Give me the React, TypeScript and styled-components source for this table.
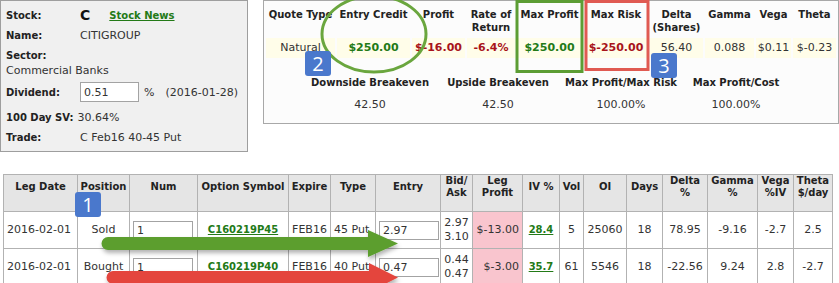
import React from "react";
import styled, { createGlobalStyle } from "styled-components";

const GlobalStyle = createGlobalStyle`
  html, body {
    margin: 0;
    padding: 0;
    background: #ffffff;
  }
  body {
    font-family: "DejaVu Sans", Verdana, sans-serif;
    font-size: 11px;
    color: #333333;
  }
`;

const Page = styled.div`
  position: relative;
  width: 839px;
  height: 283px;
  overflow: hidden;
`;

const TopRow = styled.div`
  display: flex;
  align-items: flex-start;
  gap: 15px;
`;

/* ---------- stock box ---------- */

const StockPanel = styled.div`
  box-sizing: border-box;
  width: 248px;
  height: 152px;
  padding: 4px 4px 0 5px;
  background: #f0f0f0;
  border: 1px solid #9e9e9e;
`;

const InfoRow = styled.div<{ $h: number; $top?: number }>`
  display: flex;
  align-items: center;
  height: ${(p) => p.$h}px;
  margin-top: ${(p) => p.$top ?? 0}px;
  white-space: nowrap;
`;

const Label = styled.span<{ $w?: number }>`
  flex: none;
  width: ${(p) => (p.$w ? `${p.$w}px` : "auto")};
  margin-right: ${(p) => (p.$w ? 0 : 4)}px;
  font-size: 10px;
  font-weight: bold;
  color: #222222;
`;

const Ticker = styled.span`
  font-size: 14px;
  font-weight: bold;
  color: #111111;
`;

const GreenLink = styled.a<{ $size?: number }>`
  font-size: ${(p) => p.$size ?? 10}px;
  font-weight: bold;
  color: #237a17;
  text-decoration: underline;
  cursor: pointer;
`;

const StockLink = styled(GreenLink)`
  margin-left: 19px;
`;

const SectorBlock = styled.div`
  margin-top: 3px;
  line-height: 15px;
`;

const SmallInput = styled.input<{ $w: number; $h: number }>`
  box-sizing: border-box;
  width: ${(p) => p.$w}px;
  height: ${(p) => p.$h}px;
  margin: 0;
  padding: 0 3px;
  border: 1px solid #a3a3a3;
  background: #ffffff;
  font-family: "DejaVu Sans", Verdana, sans-serif;
  font-size: 11px;
  color: #333333;
  outline: none;
`;

const Percent = styled.span`
  margin-left: 5px;
`;

const DateNote = styled.span`
  margin-left: 11px;
`;

/* ---------- quote box ---------- */

const QuotePanel = styled.div`
  box-sizing: border-box;
  width: 576px;
  height: 124px;
  padding: 0 2px;
  background: #fcfcfc;
  border: 1px solid #a8a8a8;
`;

const QuoteGrid = styled.div`
  display: grid;
  grid-template-columns: 69px 73px 53px 48px 65px 64px 53px 49px 35px 43px;
  column-gap: 2px;
`;

const QuoteHead = styled.div`
  box-sizing: border-box;
  height: 37px;
  padding-top: 7px;
  font-size: 10px;
  font-weight: bold;
  line-height: 13px;
  text-align: center;
  white-space: nowrap;
  color: #222222;
`;

type Tone = "gain" | "loss" | "plain";

const toneColor = (t?: Tone) =>
  t === "gain" ? "#237a17" : t === "loss" ? "#a8141a" : "#333333";

const QuoteCell = styled.div<{ $tone?: Tone }>`
  height: 20px;
  line-height: 20px;
  background: #fffde9;
  text-align: center;
  white-space: nowrap;
  font-weight: ${(p) => (p.$tone && p.$tone !== "plain" ? "bold" : "normal")};
  color: ${(p) => toneColor(p.$tone)};
`;

const BreakevenGrid = styled.div`
  display: grid;
  grid-template-columns: 134px 122px 124px 106px;
  row-gap: 9px;
  margin: 18px 0 0 37px;
  line-height: 13px;
  text-align: center;
  white-space: nowrap;
`;

const BreakevenHead = styled.div`
  font-size: 10px;
  font-weight: bold;
  color: #222222;
`;

/* ---------- legs table ---------- */

const LegTable = styled.table`
  margin: 22px 0 0 3px;
  border-collapse: collapse;
  table-layout: fixed;
  width: 829px;
`;

const HeadCell = styled.th`
  height: 36px;
  box-sizing: border-box;
  padding: 0 2px 12px;
  border: 1px solid #b2b2b2;
  background: #e5e5e5;
  font-size: 10px;
  font-weight: bold;
  line-height: 12px;
  text-align: center;
  vertical-align: middle;
  white-space: nowrap;
  color: #222222;
`;

const Cell = styled.td<{ $align?: "left" | "center" | "right"; $loss?: boolean }>`
  height: 37px;
  box-sizing: border-box;
  padding: 0 3px;
  border: 1px solid #b2b2b2;
  background: ${(p) => (p.$loss ? "#f9c5ce" : "#ffffff")};
  text-align: ${(p) => p.$align ?? "center"};
  vertical-align: middle;
  white-space: nowrap;
  line-height: 14px;
`;

const InputCell = styled(Cell)`
  padding: 0 2px 0 3px;
`;

/* ---------- annotations ---------- */

const Marks = styled.svg`
  position: absolute;
  left: 0;
  top: 0;
  pointer-events: none;
`;

const Badge = styled.div<{ $x: number; $y: number }>`
  position: absolute;
  left: ${(p) => p.$x}px;
  top: ${(p) => p.$y}px;
  width: 26px;
  height: 25px;
  border-radius: 3px;
  background: #4a78cc;
  color: #ffffff;
  font-family: "Open Sans", "Liberation Sans", sans-serif;
  font-size: 20px;
  line-height: 25px;
  text-align: center;
`;

const quoteHeads: React.ReactNode[] = [
  "Quote Type",
  "Entry Credit",
  "Profit",
  <>Rate of<br />Return</>,
  "Max Profit",
  "Max Risk",
  <>Delta<br />(Shares)</>,
  "Gamma",
  "Vega",
  "Theta",
];

const quoteValues: { v: string; t?: Tone }[] = [
  { v: "Natural" },
  { v: "$250.00", t: "gain" },
  { v: "$-16.00", t: "loss" },
  { v: "-6.4%", t: "loss" },
  { v: "$250.00", t: "gain" },
  { v: "$-250.00", t: "loss" },
  { v: "56.40" },
  { v: "0.088" },
  { v: "$0.11" },
  { v: "$-0.23" },
];

const breakevens = [
  ["Downside Breakeven", "42.50"],
  ["Upside Breakeven", "42.50"],
  ["Max Profit/Max Risk", "100.00%"],
  ["Max Profit/Cost", "100.00%"],
];

const colWidths = [74, 52, 68, 91, 42, 45, 65, 32, 50, 37, 24, 43, 36, 45, 50, 36, 39];

const legHeads: React.ReactNode[] = [
  "Leg Date",
  "Position",
  "Num",
  "Option Symbol",
  "Expire",
  "Type",
  "Entry",
  <>Bid/<br />Ask</>,
  <>Leg<br />Profit</>,
  "IV %",
  "Vol",
  "OI",
  "Days",
  <>Delta<br />%</>,
  <>Gamma<br />%</>,
  <>Vega<br />%IV</>,
  <>Theta<br />$/day</>,
];

const legs = [
  {
    date: "2016-02-01", pos: "Sold", num: "1", sym: "C160219P45", exp: "FEB16", type: "45 Put",
    entry: "2.97", bid: "2.97", ask: "3.10", profit: "$-13.00", iv: "28.4", vol: "5", oi: "25060",
    days: "18", delta: "78.95", gamma: "-9.16", vega: "-2.7", theta: "2.5",
  },
  {
    date: "2016-02-01", pos: "Bought", num: "1", sym: "C160219P40", exp: "FEB16", type: "40 Put",
    entry: "0.47", bid: "0.44", ask: "0.47", profit: "$-3.00", iv: "35.7", vol: "61", oi: "5546",
    days: "18", delta: "-22.56", gamma: "9.24", vega: "2.8", theta: "-2.7",
  },
];

export default function App() {
  return (
    <Page>
      <GlobalStyle />
      <TopRow>
        <StockPanel>
          <InfoRow $h={20}>
            <Label $w={74}>Stock:</Label>
            <Ticker>C</Ticker>
            <StockLink>Stock News</StockLink>
          </InfoRow>
          <InfoRow $h={20}>
            <Label $w={74}>Name:</Label>
            CITIGROUP
          </InfoRow>
          <SectorBlock>
            <Label>Sector:</Label>
            <div>Commercial Banks</div>
          </SectorBlock>
          <InfoRow $h={24} $top={2}>
            <Label $w={74}>Dividend:</Label>
            <SmallInput $w={59} $h={20} defaultValue="0.51" />
            <Percent>%</Percent>
            <DateNote>(2016-01-28)</DateNote>
          </InfoRow>
          <InfoRow $h={20} $top={3}>
            <Label>100 Day SV:</Label>
            30.64%
          </InfoRow>
          <InfoRow $h={20}>
            <Label $w={74}>Trade:</Label>
            C Feb16 40-45 Put
          </InfoRow>
        </StockPanel>

        <QuotePanel>
          <QuoteGrid>
            {quoteHeads.map((h, i) => (
              <QuoteHead key={i}>{h}</QuoteHead>
            ))}
            {quoteValues.map((q, i) => (
              <QuoteCell key={i} $tone={q.t}>
                {q.v}
              </QuoteCell>
            ))}
          </QuoteGrid>
          <BreakevenGrid>
            {breakevens.map(([h]) => (
              <BreakevenHead key={h}>{h}</BreakevenHead>
            ))}
            {breakevens.map(([h, v]) => (
              <div key={h + "v"}>{v}</div>
            ))}
          </BreakevenGrid>
        </QuotePanel>
      </TopRow>

      <LegTable>
        <colgroup>
          {colWidths.map((w, i) => (
            <col key={i} style={{ width: w }} />
          ))}
        </colgroup>
        <thead>
          <tr>
            {legHeads.map((h, i) => (
              <HeadCell key={i}>{h}</HeadCell>
            ))}
          </tr>
        </thead>
        <tbody>
          {legs.map((l) => (
            <tr key={l.sym}>
              <Cell $align="left">{l.date}</Cell>
              <Cell>{l.pos}</Cell>
              <InputCell $align="left">
                <SmallInput $w={60} $h={19} defaultValue={l.num} />
              </InputCell>
              <Cell>
                <GreenLink>{l.sym}</GreenLink>
              </Cell>
              <Cell>{l.exp}</Cell>
              <Cell $align="left">{l.type}</Cell>
              <InputCell $align="left">
                <SmallInput $w={60} $h={19} defaultValue={l.entry} />
              </InputCell>
              <Cell>
                {l.bid}
                <br />
                {l.ask}
              </Cell>
              <Cell $align="right" $loss>
                {l.profit}
              </Cell>
              <Cell>
                <GreenLink>{l.iv}</GreenLink>
              </Cell>
              <Cell>{l.vol}</Cell>
              <Cell>{l.oi}</Cell>
              <Cell>{l.days}</Cell>
              <Cell>{l.delta}</Cell>
              <Cell>{l.gamma}</Cell>
              <Cell>{l.vega}</Cell>
              <Cell>{l.theta}</Cell>
            </tr>
          ))}
        </tbody>
      </LegTable>

      <Marks width={839} height={283} viewBox="0 0 839 283">
        <defs>
          <filter id="arrowShadow" x="-5%" y="-50%" width="110%" height="200%">
            <feDropShadow dx="1" dy="3" stdDeviation="2" floodColor="#000" floodOpacity="0.3" />
          </filter>
        </defs>
        <ellipse cx={374} cy={34} rx={52} ry={38} fill="none" stroke="#6aa63e" strokeWidth={3} />
        <rect x={517} y={1.5} width={65} height={70} fill="none" stroke="#5c9d34" strokeWidth={3} />
        <rect x={586} y={1.5} width={62} height={68} fill="none" stroke="#e05a52" strokeWidth={3} />
        <g filter="url(#arrowShadow)">
          <path d="M108 237 H368 V230 L398 243.5 L368 257 V250 H108 A6.5 6.5 0 0 1 108 237 Z" fill="#5b9e2e" />
          <path d="M113 271 H369 V263 L398 277.5 L369 292 V284 H113 A6.5 6.5 0 0 1 113 271 Z" fill="#e4443c" />
        </g>
      </Marks>
      <Badge $x={75} $y={192}>1</Badge>
      <Badge $x={305} $y={51}>2</Badge>
      <Badge $x={651} $y={53}>3</Badge>
    </Page>
  );
}
